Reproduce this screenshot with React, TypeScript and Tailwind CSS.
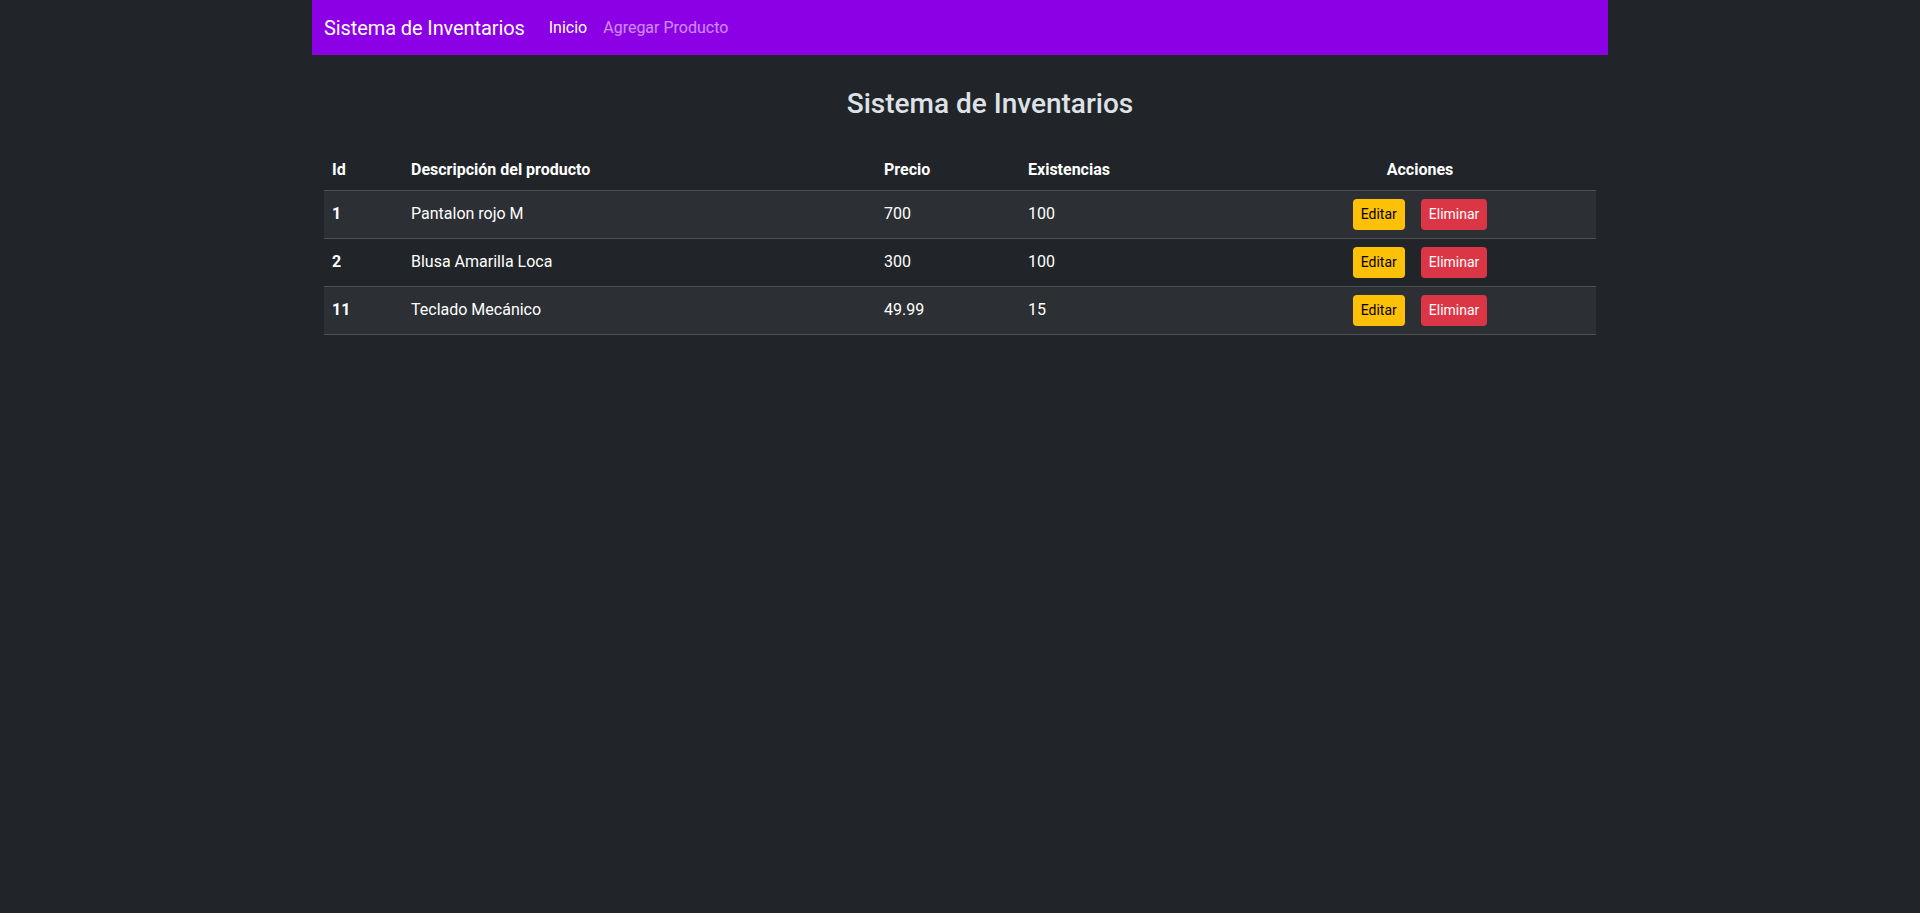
import React from "react";

const rows = [
  { id: "1", desc: "Pantalon rojo M", precio: "700", stock: "100" },
  { id: "2", desc: "Blusa Amarilla Loca", precio: "300", stock: "100" },
  { id: "11", desc: "Teclado Mecánico", precio: "49.99", stock: "15" },
];

export default function App() {
  return (
    <div
      className="min-h-[913px] bg-[#212529] text-[#dee2e6]"
      style={{ fontFamily: 'Roboto, "Noto Sans", "Liberation Sans", sans-serif' }}
    >
      <div className="mx-auto w-[1296px]">
        <nav className="flex h-[55px] items-center bg-[#8c00e6] px-3">
          <span className="mr-4 text-[20px] leading-[30px] tracking-[-0.1px] text-white">Sistema de Inventarios</span>
          <a className="px-2 text-[16px] leading-6 text-white">Inicio</a>
          <a className="px-2 text-[16px] leading-6 text-white/55">Agregar Producto</a>
        </nav>
        <div className="px-3">
          <h3 className="mt-[32px] pl-[60px] text-center text-[28px] font-medium leading-[34px] text-[#dee2e6]">
            Sistema de Inventarios
          </h3>
          <table className="mt-[29px] w-[1272px] table-fixed border-collapse text-[16px] leading-6 text-white">
            <colgroup>
              <col className="w-[79px]" />
              <col className="w-[473px]" />
              <col className="w-[144px]" />
              <col className="w-[224px]" />
              <col className="w-[352px]" />
            </colgroup>
            <thead>
              <tr className="border-b border-[#4d5154]">
                <th className="h-[40px] px-2 text-left font-bold">Id</th>
                <th className="px-2 text-left font-bold">Descripción del producto</th>
                <th className="px-2 text-left font-bold">Precio</th>
                <th className="px-2 text-left font-bold">Existencias</th>
                <th className="px-2 text-center font-bold">Acciones</th>
              </tr>
            </thead>
            <tbody>
              {rows.map((r, i) => (
                <tr
                  key={r.id}
                  className={`border-b border-[#4d5154] ${i % 2 === 0 ? "bg-[#2c3034]" : "bg-[#212529]"}`}
                >
                  <td className="h-[48px] px-2 font-bold">{r.id}</td>
                  <td className="px-2">{r.desc}</td>
                  <td className="px-2">{r.precio}</td>
                  <td className="px-2">{r.stock}</td>
                  <td className="px-2">
                    <div className="flex items-center justify-center gap-4">
                      <button className="h-[31px] rounded-[4px] bg-[#ffc107] px-2 text-[14px] leading-[21px] text-black">
                        Editar
                      </button>
                      <button className="h-[31px] rounded-[4px] bg-[#dc3545] px-2 text-[14px] leading-[21px] text-white">
                        Eliminar
                      </button>
                    </div>
                  </td>
                </tr>
              ))}
            </tbody>
          </table>
        </div>
      </div>
    </div>
  );
}
